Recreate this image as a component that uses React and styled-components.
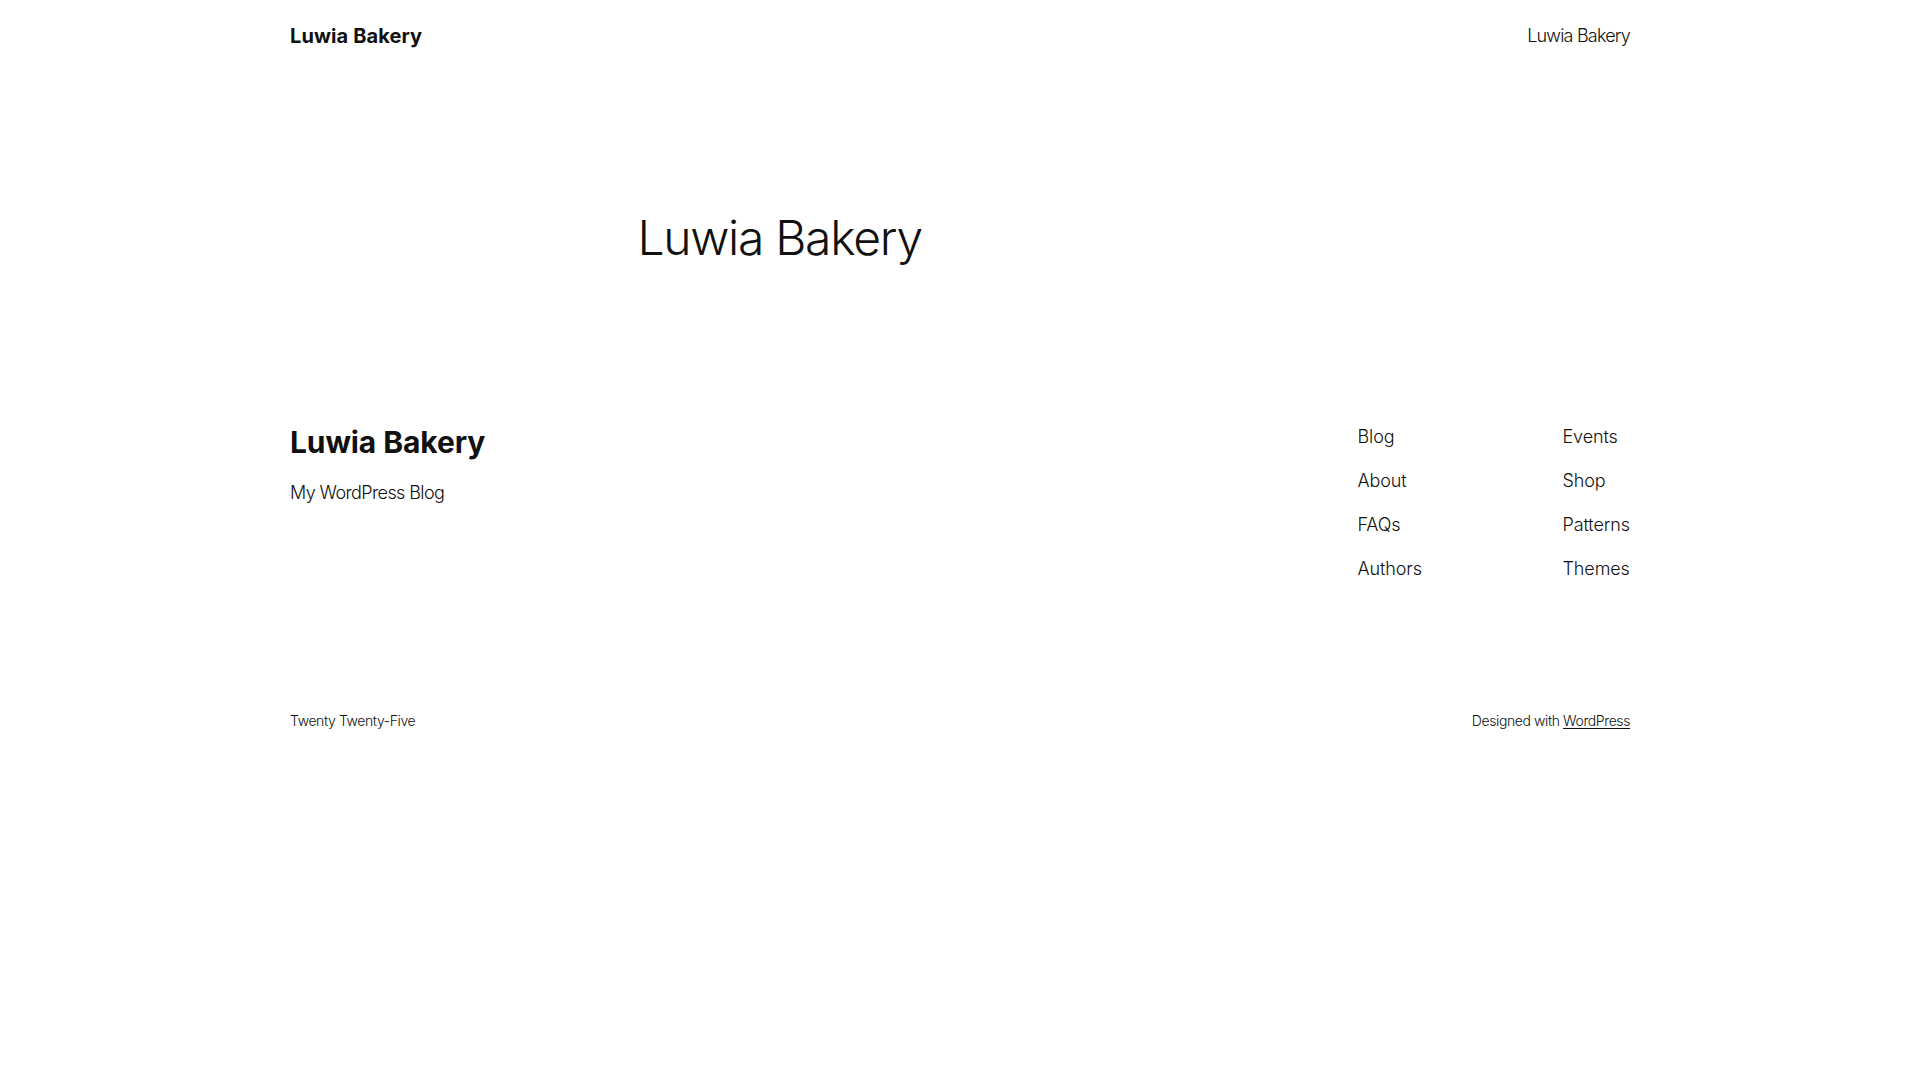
import React from "react";
import styled, { createGlobalStyle } from "styled-components";

const GlobalStyle = createGlobalStyle`
  html, body {
    margin: 0;
    padding: 0;
    background: #ffffff;
  }
  body {
    font-family: "Inter", "Noto Sans", "Liberation Sans", sans-serif;
    color: #111111;
    font-weight: 300;
    -webkit-font-smoothing: antialiased;
  }
  a {
    color: inherit;
    text-decoration: none;
  }
`;

const Page = styled.div`
  min-height: 1080px;
  display: flex;
  flex-direction: column;
`;

const Wide = styled.div`
  width: 1340px;
  margin: 0 auto;
`;

const Header = styled(Wide)`
  display: flex;
  justify-content: space-between;
  align-items: center;
  padding-top: 22px;
`;

const SiteTitle = styled.a`
  font-size: ${(p) => p.$size || 20}px;
  font-weight: 700;
  line-height: ${(p) => (p.$size > 24 ? 1.2 : 1.4)};
  letter-spacing: ${(p) => (p.$size > 24 ? -0.1 : 0.1)}px;
`;

const NavLink = styled.a`
  font-size: 18px;
  line-height: 1.4;
  font-weight: 300;
  letter-spacing: ${(p) => p.$tracking ?? -0.1}px;
`;

const Main = styled.main`
  width: 645px;
  margin: 0 auto;
  padding-top: 159px;
`;

const PageTitle = styled.h1`
  margin: 0;
  font-size: 48px;
  line-height: 1.2;
  font-weight: 300;
  letter-spacing: -1.3px;
`;

const Footer = styled(Wide)`
  padding-top: 157px;
`;

const FooterTop = styled.div`
  display: flex;
  justify-content: space-between;
  align-items: flex-start;
`;

const Brand = styled.div`
  display: flex;
  flex-direction: column;
  gap: 20px;
`;

const Tagline = styled.p`
  margin: 0;
  font-size: 18px;
  line-height: 1.4;
  font-weight: 300;
  letter-spacing: -0.6px;
`;

const FooterNav = styled.nav`
  display: grid;
  grid-template-columns: 205px auto;
`;

const NavColumn = styled.div`
  display: flex;
  flex-direction: column;
  gap: 19px;
`;

const Credits = styled.div`
  display: flex;
  justify-content: space-between;
  align-items: center;
  padding-top: 129px;
  font-size: 14px;
  line-height: 1.5;
  font-weight: 300;
  letter-spacing: -0.4px;
`;

const Underlined = styled.a`
  text-decoration: underline;
  text-underline-offset: 2px;
  text-decoration-thickness: 1px;
`;

const leftLinks = ["Blog", "About", "FAQs", "Authors"];
const rightLinks = ["Events", "Shop", "Patterns", "Themes"];

export default function App() {
  return (
    <>
      <GlobalStyle />
      <Page>
        <Header as="header">
          <SiteTitle href="#">Luwia Bakery</SiteTitle>
          <NavLink href="#" $tracking={-0.8}>
            Luwia Bakery
          </NavLink>
        </Header>

        <Main>
          <PageTitle>Luwia Bakery</PageTitle>
        </Main>

        <Footer as="footer">
          <FooterTop>
            <Brand>
              <SiteTitle href="#" $size={30}>
                Luwia Bakery
              </SiteTitle>
              <Tagline>My WordPress Blog</Tagline>
            </Brand>
            <FooterNav>
              <NavColumn>
                {leftLinks.map((l) => (
                  <NavLink key={l} href="#">
                    {l}
                  </NavLink>
                ))}
              </NavColumn>
              <NavColumn>
                {rightLinks.map((l) => (
                  <NavLink key={l} href="#">
                    {l}
                  </NavLink>
                ))}
              </NavColumn>
            </FooterNav>
          </FooterTop>
          <Credits>
            <span>Twenty Twenty-Five</span>
            <span>
              Designed with <Underlined href="#">WordPress</Underlined>
            </span>
          </Credits>
        </Footer>
      </Page>
    </>
  );
}
